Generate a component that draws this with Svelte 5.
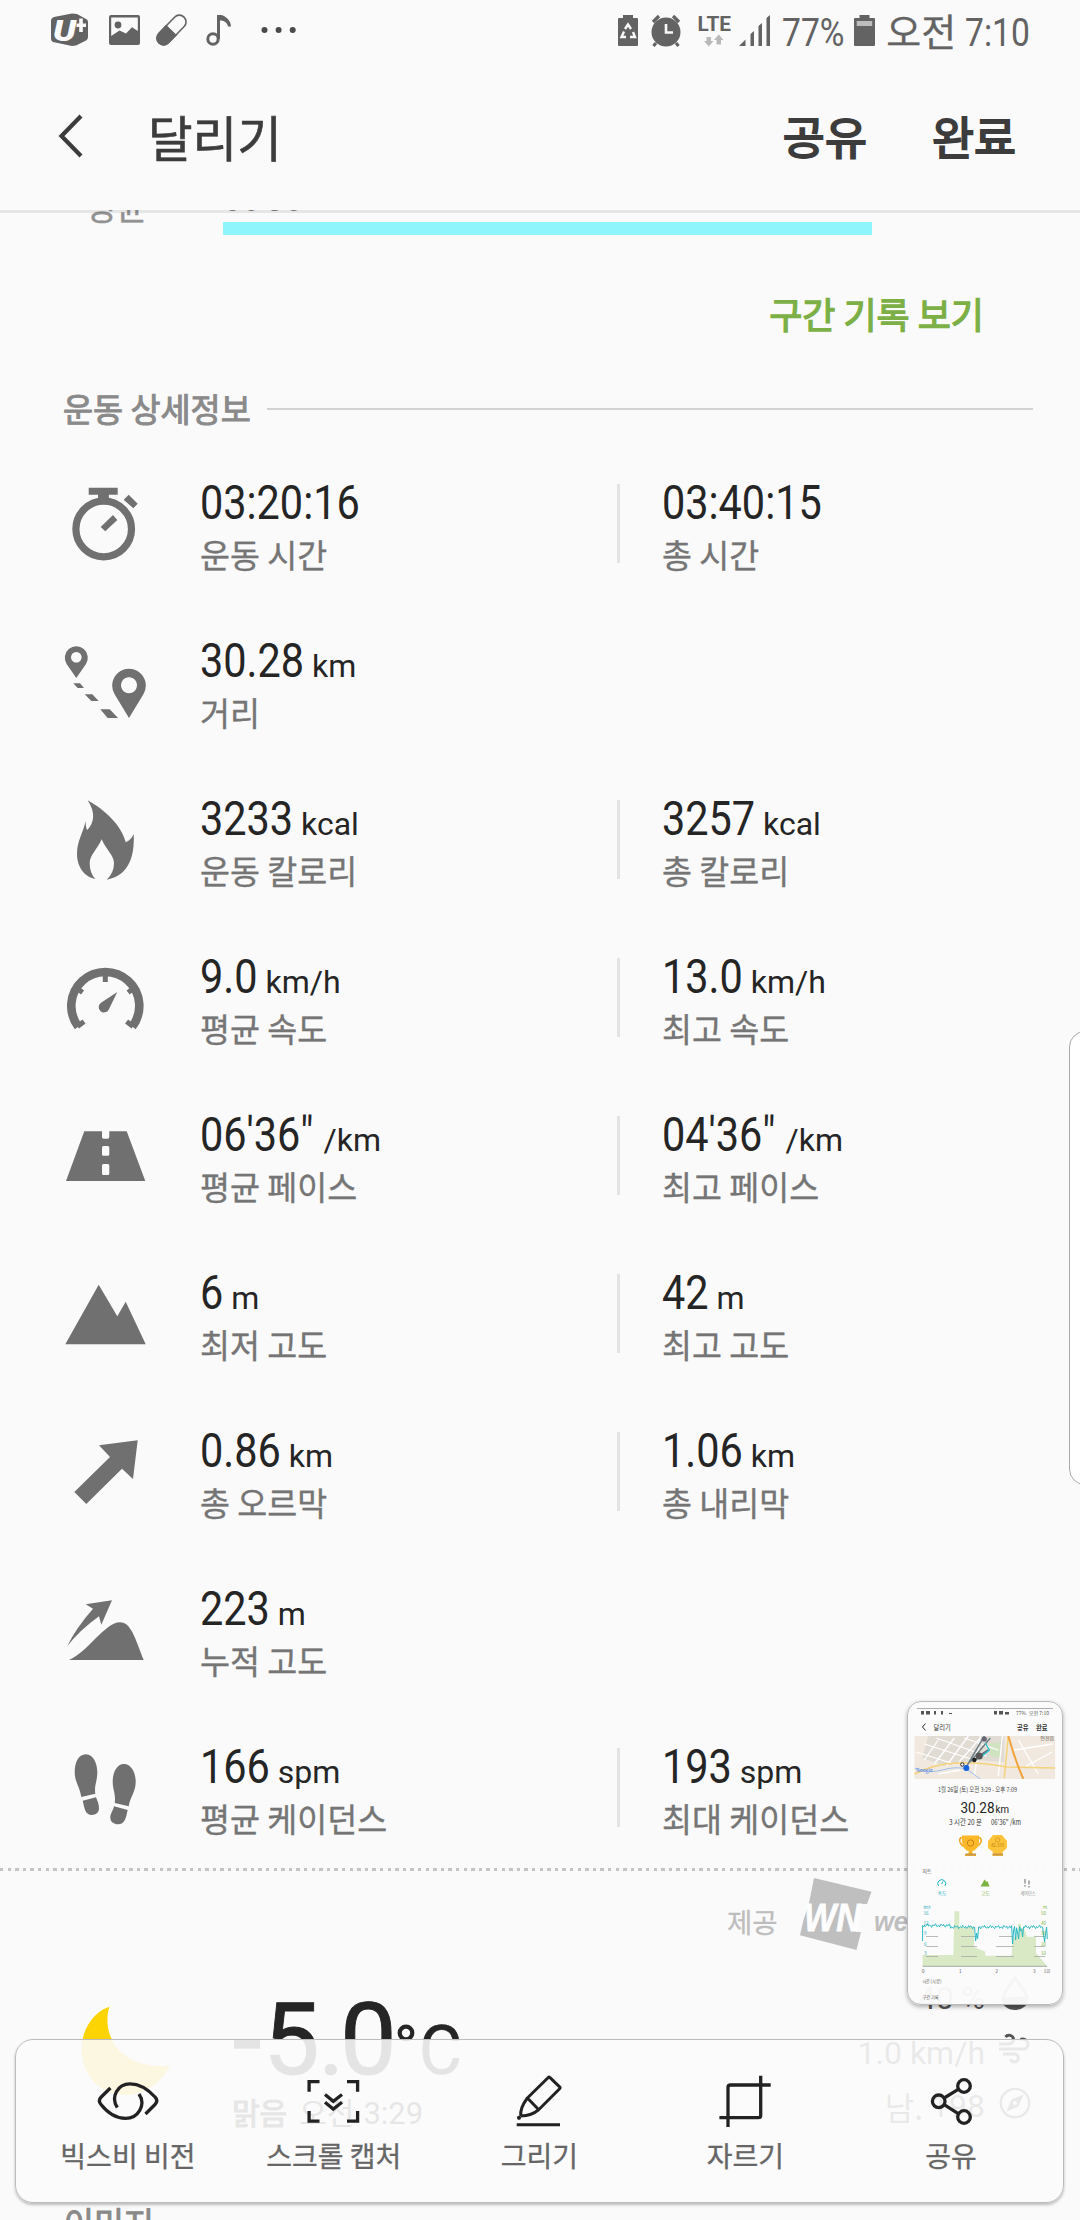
<script>
  const rows = [
    { icon: 'stopwatch', cells: [['03:20:16', '', '운동 시간'], ['03:40:15', '', '총 시간']] },
    { icon: 'route', cells: [['30.28', 'km', '거리']] },
    { icon: 'flame', cells: [['3233', 'kcal', '운동 칼로리'], ['3257', 'kcal', '총 칼로리']] },
    { icon: 'gauge', cells: [['9.0', 'km/h', '평균 속도'], ['13.0', 'km/h', '최고 속도']] },
    { icon: 'road', cells: [['06\'36"', '/km', '평균 페이스'], ['04\'36"', '/km', '최고 페이스']] },
    { icon: 'mountain', cells: [['6', 'm', '최저 고도'], ['42', 'm', '최고 고도']] },
    { icon: 'arrow', cells: [['0.86', 'km', '총 오르막'], ['1.06', 'km', '총 내리막']] },
    { icon: 'hill', cells: [['223', 'm', '누적 고도']] },
    { icon: 'feet', cells: [['166', 'spm', '평균 케이던스'], ['193', 'spm', '최대 케이던스']] }
  ];

  const tools = [
    ['vision', '빅스비 비전'],
    ['scroll', '스크롤 캡처'],
    ['draw', '그리기'],
    ['crop', '자르기'],
    ['share', '공유']
  ];

  // Advance widths in em, narrowed to a condensed face.
  const NARROW = 0.863;
  const advance = { ':': 0.242, '.': 0.263, "'": 0.174, '"': 0.37, '%': 0.733 };
  const widthOf = (text, size) =>
    [...text].reduce((sum, ch) => sum + (advance[ch] ?? 0.5615), 0) * size * NARROW;

  // Pace trace of the preview chart.
  const dips = { 53: 240, 54: 232, 55: 238, 90: 243, 91: 229, 93: 239, 95: 232, 96: 238, 98: 230, 100: 236, 121: 234, 122: 241, 123: 233 };
  let trace = 'M15.6 240';
  for (let i = 0; i <= 124; i++) {
    const y = dips[i] ?? 226 + Math.sin(i * 2.3) * 1.2 + Math.sin(i * 0.9) * 0.8 - (i < 28 ? 1.5 : 0);
    trace += ` L${(15.6 + i).toFixed(1)} ${y.toFixed(1)}`;
  }
  trace += ' L140.3 238';
</script>

{#snippet narrow(text, size)}
  <span class="narrow" style="width:{widthOf(text, size)}px"><span class="squeeze">{text}</span></span>
{/snippet}

{#snippet detailIcon(name)}
  <svg class="icon" viewBox="0 0 90 99" width="90" height="99" fill="#707070">
    {#if name === 'stopwatch'}
      <circle cx="43.7" cy="54" r="27.8" fill="none" stroke="#707070" stroke-width="7.2" />
      <path d="M28.7 12.7H57.7V19.7H48.9V27H38V19.7H28.7ZM68.7 19.7L77.7 28.7L73.3 33.3L63.7 24.7ZM53 40L57.3 45L45.3 56.3L40.7 52Z" />
    {:else if name === 'route'}
      <path fill-rule="evenodd" d="M16.3 45L6.6 31A11.5 11.5 0 1 1 26 31ZM16.3 19a5.3 5.3 0 1 0 .01 0Z" />
      <path fill-rule="evenodd" d="M69 85L54.6 61.2A16.8 16.8 0 1 1 83.4 61.2ZM69 44.3a8 8 0 1 0 .01 0Z" />
      <path d="M13.3 50.3H20L24 55H17.7ZM24.7 61.3H32.3L38.7 68H31.3ZM40.3 76.3H49.7L58 85H47.7Z" />
    {:else if name === 'flame'}
      <path d="M27.7 9.3C45 19 62 35 65.7 51.3Q71 49 73.7 43C75 70 66 85 46.7 88.7Q54 82 54 72.3C54 64 46 59 41.7 48.3C37 59 29.7 64 29.7 72.3Q29.7 82 35.3 88C22 85 17 73 17 63C17 50 23 42 25.7 30Q25.5 37 27.3 39C34 32 36 22 27.7 9.3Z" />
    {:else if name === 'gauge'}
      <g fill="none" stroke="#707070">
        <path d="M18.3 77.6A34 34 0 1 1 72.3 77.6" stroke-width="8.6" />
        <path d="M17.5 77.5L24 72.5M73.1 77.5L66.6 72.5M45.3 27V33M17.5 39.5L22.5 43.5M73.1 39.5L68.1 43.5" stroke-width="5" />
      </g>
      <path d="M57.3 43L48.8 60.4A5.3 5.3 0 1 1 41 53.8Z" />
    {:else if name === 'road'}
      <path fill-rule="evenodd" d="M24.3 24.3H42V30Q42 31.7 43.7 31.7H47.6Q49.3 31.7 49.3 30V24.3H66.7L85.3 74H6ZM43.5 39H47.8Q49.3 39 49.3 40.5V47.2Q49.3 48.7 47.8 48.7H43.5Q42 48.7 42 47.2V40.5Q42 39 43.5 39ZM43.5 57H47.8Q49.3 57 49.3 58.5V66.5Q49.3 68 47.8 68H43.5Q42 68 42 66.5V58.5Q42 57 43.5 57Z" />
    {:else if name === 'mountain'}
      <path d="M38.7 19.7L57.3 51.3L65.7 36.7L85.7 79.3H5.3Z" />
    {:else if name === 'arrow'}
      <path d="M77.7 17.3L73 56L62 45.7L26.3 81L14.3 69L50 34L39 22.3Z" />
    {:else if name === 'hill'}
      <path d="M52 19.3L41.3 43.7L39 35.3Q20 49 7.3 65Q16 47 33 27.7L25.7 23.3ZM9 79C28 71 45 41.3 60 41.3C71 41.3 75 57 83.7 79Z" />
    {:else}
      <path d="M26 15.3C18 15.3 14.7 24 14.7 33C14.7 43 19.5 47 21.3 58L35.3 54.7C34 46 37.3 43 37.3 33C37.3 24 33 15.3 26 15.3ZM22.7 61.7L36 58.3C37.5 62 39 65 39 69.3C39 74 35.5 76 32 76C25 76 24.5 69 22.7 61.7Z" />
      <path d="M64 25C56.5 25 52.7 34 52.7 42.7C52.7 51 56 55 54.7 64L68.7 67.3C70 58 75.7 53 75.7 42.7C75.7 33 71 25 64 25ZM54 67.3L67.7 71C66 78 65.5 85.3 58 85.3C54 85.3 50.3 83 50.3 78.5C50.3 74.5 53 72 54 67.3Z" />
    {/if}
  </svg>
{/snippet}

{#snippet toolIcon(name)}
  <svg class="icon" viewBox="0 0 64 60" width="64" height="60" fill="none" stroke="#222" stroke-width="3.3">
    {#if name === 'vision'}
      <path d="M14.4 17L5.2 26Q1.6 29.7 5 33.5Q16 47.4 29.5 47.4C42 47.4 50.5 34 43 23M49.5 43L59 33.5Q62.6 29.7 59 26Q47 12.8 34 12.8C21.5 12.8 14.5 26 21.3 36.7" />
    {:else if name === 'scroll'}
      <path d="M7.1 20.7V10.6H17.5M45 10.6H55.6V20.7M55.6 40V50.1H45M17.5 50.1H7.1V40M23 23.5L31.3 30.3L40 23.5M23 31.3L31.3 38.1L40 31.3" />
    {:else if name === 'draw'}
      <path d="M20.4 27L41 6.7Q42 5.7 43 6.7L52.6 15.8Q53.6 16.8 52.6 17.8L31.7 38.7ZM20.4 27Q12.8 37 13.8 45M31.7 38.7Q25 44.8 13.8 45M9.7 53.7H53" stroke-width="3" />
      <circle cx="12" cy="46.8" r="2.1" fill="#222" stroke="none" />
    {:else if name === 'crop'}
      <path d="M15 56V16.5Q15 14 17.5 14H57.7M47.7 4.7V44.5Q47.7 46.7 45.2 46.7H6.4" />
    {:else}
      <circle cx="19.7" cy="30.3" r="6.3" />
      <circle cx="45" cy="15" r="6.3" />
      <circle cx="45" cy="46" r="6.3" />
      <path d="M25.2 27L39.6 18.2M25.2 33.6L39.6 42.8" />
    {/if}
  </svg>
{/snippet}

<div class="screen">
  <header>
    <div class="status">
      <svg viewBox="0 0 260 36" width="260" height="36" fill="#636363">
        <path d="M4 5L22 1.5L27 2L37 7.5Q38 8.500 38 10V25Q38 27 36.500 28.200L26 33.500L22 34L3 30Q1 29 1 27V9Q1 6 4 5Z" />
        <text class="logo" x="3" y="29" textLength="23" lengthAdjust="spacingAndGlyphs">U</text>
        <path d="M31 6.500V20M26.500 13.200H36" stroke="#fafafa" stroke-width="3.600" />
        <rect x="59" y="3" width="31" height="30" rx="2" />
        <path d="M61.200 5.500H87.800V19L82 15.300L76 21.500L69.500 18.500L61.200 24Z" fill="#fafafa" />
        <circle cx="68" cy="13" r="3.400" />
        <g transform="rotate(-46 121.500 18)">
          <rect x="103.500" y="11.300" width="36" height="13.400" rx="6.700" fill="none" stroke="#636363" stroke-width="1.600" />
          <path d="M121.500 10.500H110.200A7.500 7.500 0 0 0 110.200 25.500H121.500Z" />
        </g>
        <circle cx="163" cy="27" r="5.200" fill="none" stroke="#636363" stroke-width="3" />
        <path d="M167 3H170.500C175 3.500 181 8 181 14.500H178C177 9.500 173 8.500 170 8.500V27H167Z" />
        <g fill="#4a4a4a"><circle cx="214.500" cy="18" r="3" /><circle cx="228.600" cy="18" r="3" /><circle cx="242.700" cy="18" r="3" /></g>
      </svg>
      <div class="status-right">
        <svg viewBox="0 0 158 36" width="158" height="36" fill="#636363">
          <path d="M2 6H6V3H16V6H20Q21 6 21 7V33Q21 34 20 34H2Q1 34 1 33V7Q1 6 2 6Z" />
          <path d="M8 17L11 12.500L14 17M16 20L18 25H13M9 25H4.500L7 19.500" fill="none" stroke="#fafafa" stroke-width="2.400" />
          <circle cx="49" cy="20" r="14.500" />
          <path d="M36 10L42 4M62 10L56 4M39 31L36.500 34M59 31L61.500 34" stroke="#636363" stroke-width="3.200" />
          <path d="M49 12V20.500H56" fill="none" stroke="#fafafa" stroke-width="2.600" />
          <text class="lte" x="80.500" y="18.700" textLength="33.500" lengthAdjust="spacingAndGlyphs">LTE</text>
          <path d="M89.500 25H94V29H96.500L91.800 34.500L87 29H89.500ZM99.500 32.500H104V28H106.500L101.800 22.500L97 28H99.500Z" fill="#b9b9b9" />
          <path d="M122 34L128.500 27.500V34ZM133.500 22L137 19V34H133.500ZM141.500 14L145 11V34H141.500ZM149.500 6L153 3V34H149.500Z" />
        </svg>
        <span class="clock pct">{@render narrow('77%', 39)}</span>
        <svg class="batt" viewBox="0 0 21 36" width="21" height="36" fill="#636363">
          <path d="M1 6H5.500V3H15.500V6H20Q21 6 21 7V33Q21 34 20 34H1Q0 34 0 33V7Q0 6 1 6Z" />
          <rect x="2.700" y="9" width="15.500" height="5" fill="#bdbdbd" />
        </svg>
        <span class="ampm">오전</span>
        <span class="clock">{@render narrow('7:10', 39)}</span>
      </div>
    </div>
    <div class="titlebar">
      <svg viewBox="0 0 30 48" width="30" height="48" fill="none" stroke="#3c3c3c" stroke-width="4.200">
        <path d="M25 4L5.500 24L25 44" />
      </svg>
      <h1>달리기</h1>
      <b class="act">공유</b>
      <b class="act">완료</b>
    </div>
  </header>

  <main>
    <div class="split">
      <span class="split-name">평균</span>
      <div class="split-body">
        <div class="split-value">{@render narrow('06\'36"', 38)}</div>
        <div class="split-bar"></div>
      </div>
    </div>
    <div class="link">구간 기록 보기</div>
    <div class="section"><span>운동 상세정보</span><i></i></div>

    <div class="details">
      {#each rows as row}
        <div class="row">
          {@render detailIcon(row.icon)}
          {#each row.cells as [value, unit, label], i}
            <div class="cell" class:second={i === 1}>
              <div class="value">{@render narrow(value, 48)}<span class="unit">{unit}</span></div>
              <div class="label">{label}</div>
            </div>
          {/each}
        </div>
      {/each}
    </div>

    <div class="dots"></div>

    <div class="provider">
      <span>제공</span>
      <svg viewBox="0 0 120 76" width="120" height="76">
        <path d="M16 2L73.500 15.700L69 28H62L58 56H63L58.500 74L2 59.300L5.500 44L11 27Z" fill="#bfbfbf" />
        <text class="wn" x="6" y="55" textLength="57" lengthAdjust="spacingAndGlyphs">WN</text>
        <text class="we" x="76" y="55" textLength="34" lengthAdjust="spacingAndGlyphs">we</text>
      </svg>
    </div>

    <div class="weather">
      <svg class="moon" viewBox="0 0 92 94" width="92" height="94">
        <path d="M29.500 2.700C22 25 33 65 90 62C79 82 62 91 45 91C20 91 1.600 71 1.600 45C1.600 26 13 8 29.500 2.700Z" fill="#fcd404" />
      </svg>
      <div class="temps">
        <svg viewBox="0 0 240 84" width="240" height="84" fill="#252525">
          <rect x="4" y="43" width="26" height="9.700" />
          <text class="temp" x="33 88 110" y="78">5.0</text>
          <circle cx="176" cy="37" r="6.300" fill="none" stroke="#252525" stroke-width="4.200" />
          <text class="deg" x="189" y="78" textLength="43" lengthAdjust="spacingAndGlyphs">C</text>
        </svg>
        <div class="cond"><b>맑음</b><span class="when">오전</span><span class="lat">3:29</span></div>
      </div>
      <div class="facts">
        <div class="fact"><span class="lat">40 %</span>
          <svg class="up" viewBox="0 0 34 36" width="34" height="36"><path d="M17 3C12 11 5 17 5 23.500A12 10 0 0 0 29 23.500C29 17 22 11 17 3Z" fill="none" stroke="#555" stroke-width="3" /><path d="M5 22H29A12 11 0 0 1 5 22Z" fill="#555" /></svg>
        </div>
        <div class="fact"><span class="lat">1.0 km/h</span>
          <svg class="up" viewBox="0 0 34 36" width="34" height="36" fill="none" stroke="#555" stroke-width="3"><path d="M1 14H11Q16 13 15.500 9A4.500 4.500 0 0 0 7.500 7M1 19H27A4.600 4.600 0 1 0 22.500 9.500M5 24H17A4 4 0 1 1 12.500 29" /></svg>
        </div>
        <div class="fact last"><span>남.</span> <span class="lat num">198</span>
          <svg viewBox="0 0 34 36" width="34" height="36"><circle cx="17" cy="15" r="14.200" fill="none" stroke="#555" stroke-width="2.400" /><path fill-rule="evenodd" d="M25.500 6.500L20.500 18.500L8.500 23.500L13.500 11.500ZM17 13a2 2 0 1 0 .01 0Z" fill="#555" /></svg>
        </div>
      </div>
    </div>
    <div class="next">이미지</div>
  </main>

  <div class="edge"></div>

  <div class="toolbar">
    {#each tools as [icon, name]}
      <div class="tool">
        {@render toolIcon(icon)}
        <span>{name}</span>
      </div>
    {/each}
  </div>

  <div class="preview">
    <svg viewBox="0 0 156 304" width="156" height="304">
      <path d="M10 7.500H146" stroke="#9a9a9a" stroke-width=".8" />
      <g fill="#555">
        <path d="M14 10h3v3.500h-3zM19 10h4v3.500h-4zM27 10h2v3.500h-2zM34 10h2v3.500h-2zM42 12h3v1h-3zM87 10h3v3.500h-3zM92 10h4v3.500h-4zM98 11h4v2.500h-4z" />
        <text class="t5" x="109" y="14">77%</text><text class="t5" x="122" y="14">오전 7:10</text>
      </g>
      <path d="M18.500 22.500L15.500 26L18.500 29.500" fill="none" stroke="#333" />
      <g fill="#333">
        <text class="t6" x="26.500" y="28.500">달리기</text>
        <text class="t6 bold" x="110" y="28.500">공유</text>
        <text class="t6 bold" x="129" y="28.500">완료</text>
      </g>
      <svg x="7.300" y="35" width="141" height="43" viewBox="0 0 141 43">
        <rect width="141" height="43" fill="#f1e9df" />
        <path d="M14 0H90V26L60 24L30 30L8 22Z" fill="#e0dbd3" />
        <path d="M74 8L86 6L86 22L76 20Z" fill="#cfe3c0" />
        <path d="M10 24L24 4M20 28L40 2M32 30L54 0M44 27L66 2M10 8L60 24M22 2L72 20M2 16L40 28M50 2L84 14M60 40L66 0M84 40L88 0M24 38L46 34M104 4L124 38M112 30L138 16M100 14L138 8" stroke="#fff" stroke-width="1.300" fill="none" />
        <path d="M0 38Q20 28 42 27T92 31L141 32M90 42L94 0" stroke="#f4d27a" stroke-width="1.500" fill="none" />
        <path d="M94 0Q100 22 109 43" stroke="#f0a23c" stroke-width="2" fill="none" />
        <path d="M0 32Q14 38 28 34T52 33L66 43" stroke="#9dbdec" fill="none" />
        <path d="M52 31L70 0M56 26L76 2" stroke="#6f7f88" stroke-width="1.500" fill="none" />
        <path d="M60 25L68 18L74 14" stroke="#5f707a" stroke-width="2" fill="none" />
        <path d="M71 7L75 14L68 20" stroke="#25bfd0" stroke-width="1.300" fill="none" />
        <circle cx="70" cy="3" r="2.600" fill="#667" /><circle cx="65" cy="20" r="3.500" fill="#555" /><circle cx="60" cy="24" r="2.200" fill="#222" />
        <circle cx="48" cy="28.500" r="1.700" fill="#fff" stroke="#222" />
        <circle cx="52" cy="32" r="3" fill="#1662dd" />
        <text class="t5" x="2" y="36" fill="#4a7fe0">Google</text>
        <text class="t5" x="126" y="4" fill="#555">연천읍</text>
      </svg>
      <text class="t6" x="31" y="91" fill="#444" textLength="79" lengthAdjust="spacingAndGlyphs">1월 26일 (토) 오전 3:29 - 오후 7:09</text>
      <text class="big" x="53.500" y="112" fill="#222" textLength="34" lengthAdjust="spacingAndGlyphs">30.28</text>
      <text class="mid" x="88.500" y="112" fill="#222" textLength="13.500" lengthAdjust="spacingAndGlyphs">km</text>
      <text class="t7" x="42" y="123.500" fill="#333" textLength="33" lengthAdjust="spacingAndGlyphs">3 시간 20 분</text>
      <text class="t7" x="84" y="123.500" fill="#333" textLength="30" lengthAdjust="spacingAndGlyphs">06'36" /km</text>
      <path d="M55 136.500Q52 137 53 141Q54.500 145 58 145.500M71.500 136.500Q75 137 74 141Q72 145 68.500 145.500" fill="none" stroke="#f2a41f" stroke-width="1.600" />
      <path d="M55 134.500H72V141Q71 149 65 150.500L66 153H69V155H58V153H61L62 150.500Q56 149 55 141Z" fill="#fbb829" />
      <circle cx="63.500" cy="142" r="3.200" fill="none" stroke="#c07f10" stroke-width=".9" />
      <path d="M86 134H95L100 140V147L95.500 151L96 155H85.500L86 151L81 147V140Z" fill="#fbc43a" />
      <path d="M85.500 153.500H96M58.500 153.500H69" stroke="#c8964a" stroke-width="1.800" />
      <text class="t5" x="84" y="145.500" fill="#c07f10" textLength="13" lengthAdjust="spacingAndGlyphs">42.195</text>
      <circle cx="90.600" cy="139" r="2.200" fill="none" stroke="#d08f18" stroke-width=".7" />
      <text class="t5" x="15.500" y="171.500" fill="#555">차트</text>
      <path d="M31.500 185A4 4 0 1 1 38 185M34.700 183L36 180.500" fill="none" stroke="#19b3c4" />
      <path d="M73.500 185.500L77.500 178.500L79.500 181L80.500 180L82.500 185.500Z" fill="#7cb342" />
      <path d="M118 178v4.500M118 184v1.500M122 179.500v4M122 185v1.500" stroke="#b0b0b0" stroke-width="2" />
      <text class="t5" x="30.500" y="193.500" fill="#19b3c4">속도</text>
      <text class="t5" x="74" y="193.500" fill="#7cb342">고도</text>
      <text class="t5" x="113.500" y="193.500" fill="#888" textLength="15" lengthAdjust="spacingAndGlyphs">케이던스</text>
      <path d="M15.600 254H46.300L47.500 210.300H52.300V226H67V246L78.300 250.700V254.700H104.500L106 237L111 234V223H114V227H117L120 235.700H129V252L140 265H15.600Z" fill="#d9e9c6" />
      <path d="M19 235.500H31M54 235.500H70M92 235.500H106M127 235.500H138M19 245.500H31M54 245.500H70M89 245.500H107M127 245.500H138M19 255.500H31M54 255.500H70M89 255.500H107M127 255.500H138" stroke="#a9aaa5" stroke-width=".8" />
      <path d="M15.600 265.300H140" stroke="#8d958a" stroke-width=".8" />
      <path d={trace} fill="none" stroke="#2bb9c4" stroke-width="1" />
      <g fill="#19a9ba"><text class="t4" x="16.500" y="208" textLength="7" lengthAdjust="spacingAndGlyphs">km/h</text><text class="t4" x="16.500" y="214">16</text><text class="t4" x="16.500" y="224">12</text><text class="t4" x="17" y="234">9</text><text class="t4" x="17" y="244.500">6</text><text class="t4" x="17" y="254">3</text></g>
      <g fill="#7cb342"><text class="t4" x="136" y="208">m</text><text class="t4" x="134" y="214">50</text><text class="t4" x="134" y="224">40</text><text class="t4" x="134" y="234">30</text><text class="t4" x="134" y="244.500">20</text><text class="t4" x="134" y="254">10</text></g>
      <g fill="#555"><text class="t4" x="15" y="272">0</text><text class="t4" x="52" y="272">1</text><text class="t4" x="88.500" y="272">2</text><text class="t4" x="126" y="272">3</text><text class="t4" x="137" y="272" textLength="6" lengthAdjust="spacingAndGlyphs">3:20</text>
        <text class="t5" x="15.500" y="281.500" textLength="19" lengthAdjust="spacingAndGlyphs">시간 (시:분)</text><text class="t5" x="15.500" y="297.500" textLength="16" lengthAdjust="spacingAndGlyphs">구간 기록</text></g>
    </svg>
  </div>
</div>

<style>
  :global(body) { margin: 0; background: #fafafa; }
  .screen {
    position: relative; width: 1080px; height: 2220px; overflow: hidden;
    background: #fafafa; font-family: "Noto Sans CJK KR", "Noto Sans", sans-serif; color: #252525;
    display: flex; flex-direction: column; white-space: nowrap;
  }
  svg { display: block; flex: none; }
  .narrow { display: inline-block; flex: none; text-align: left; }
  .squeeze { display: inline-block; transform: scaleX(.863); transform-origin: 0 50%; }

  header { height: 210px; flex: none; position: relative; z-index: 1; }
  header::after { content: ""; position: absolute; left: 0; right: 0; top: 100%; height: 3px; background: rgba(0, 0, 0, .08); }
  .status { height: 64px; padding: 0 50px; display: flex; justify-content: space-between; box-sizing: border-box; }
  .status > svg, .status-right > svg { margin-top: 12px; }
  .status-right { display: flex; }
  .clock { font: 39px/48px Roboto, sans-serif; color: #636363; margin-top: 9px; }
  .pct { margin-left: 7px; }
  .batt { margin-left: 10px; }
  .ampm { font-size: 38px; line-height: 48px; color: #636363; margin: 6px 9px 0 11px; -webkit-text-stroke: .3px; }
  .logo { font: italic 900 30px Roboto, sans-serif; fill: #fafafa; }
  .lte { font: 700 20px Roboto, sans-serif; }

  .titlebar { height: 146px; display: flex; padding: 0 64px 0 56px; color: #3c3c3c; }
  .titlebar svg { margin-top: 48px; }
  h1 { margin: 42px auto 0 62px; font-size: 48.5px; font-weight: 400; line-height: 60px; -webkit-text-stroke: .6px; }
  .act { font-size: 45.7px; font-weight: 400; line-height: 60px; margin: 41px 0 0 65px; -webkit-text-stroke: 1.9px; }

  main { flex: none; height: 2010px; overflow: hidden; }
  .split { height: 25px; display: flex; }
  .split-name { width: 138px; margin: -24px 0 0 85px; font-size: 34px; line-height: 40px; color: #929292; -webkit-text-stroke: .4px; }
  .split-body { width: 649px; margin-top: -32px; }
  .split-value { font: 38px/40px Roboto, sans-serif; height: 40px; color: #808080; }
  .split-bar { height: 13px; margin-top: 4px; background: #8df5fb; }
  .link { margin: 54px 96px 0 0; text-align: right; font-size: 36px; line-height: 48px; color: #7cb046; -webkit-text-stroke: 1.3px; }
  .section { margin: 51px 47px 0 63px; display: flex; gap: 16px; align-items: center; font-size: 32.7px; line-height: 40px; color: #8a8a8a; -webkit-text-stroke: 1px; }
  .section i { flex: 1; height: 2px; background: #d3d3d3; margin-top: 2px; }

  .details { margin-top: 47px; display: grid; row-gap: 59px; }
  .row { display: grid; grid-template-columns: 90px 367px 1fr; height: 99px; padding-left: 60px; column-gap: 50px; }
  .cell.second { padding-left: 45px; position: relative; }
  .cell.second::before { content: ""; position: absolute; left: 0; top: 9px; width: 3px; height: 79px; background: #e3e3e3; }
  .value { height: 56px; display: flex; align-items: baseline; font: 48px/56px Roboto, sans-serif; color: #252525; }
  .unit { font-size: 32px; line-height: 32px; margin-left: 8px; }
  .label { margin-top: 3px; font-size: 32.6px; line-height: 40px; color: #757575; -webkit-text-stroke: .35px; }

  .dots { margin-top: 30px; height: 3px; background: repeating-linear-gradient(90deg, #c3c3c3 0 3.500px, transparent 3.500px 7.600px); }
  .provider { height: 100px; display: flex; padding: 5px 0 0 727px; box-sizing: border-box; color: #bdbdbd; font-size: 27.500px; line-height: 40px; }
  .provider span { width: 71px; margin-top: 25px; -webkit-text-stroke: .3px; }
  .wn { font: italic 700 38px "Liberation Sans", sans-serif; fill: #fdfdfd; stroke: #fdfdfd; stroke-width: .8px; }
  .we { font: italic 700 28px "Liberation Sans", sans-serif; fill: #bfbfbf; }

  .weather { height: 231px; display: flex; padding-left: 80px; }
  .moon { margin-top: 33px; }
  .temps { margin: 25px 0 0 58px; flex: 1; }
  .temp { font: 101px Roboto, sans-serif; stroke: #252525; stroke-width: .9px; }
  .deg { font: 69px Roboto, sans-serif; stroke: #252525; stroke-width: .6px; }
  .cond { margin: 11px 0 0 2px; font-size: 30px; line-height: 40px; color: #333; display: flex; align-items: baseline; }
  .cond b { font-weight: 400; -webkit-text-stroke: 1.2px; }
  .cond .when { margin: 0 9px 0 12px; }
  .cond .lat { font-size: 31px; }
  .lat { font-family: Roboto, sans-serif; }
  .facts { width: 300px; padding-right: 48px; }
  .fact { height: 54.500px; display: flex; justify-content: flex-end; align-items: center; font-size: 32px; line-height: 40px; color: #555; }
  .fact svg { margin-left: 13px; }
  .fact .up { margin-bottom: 10px; }
  .last { height: 51px; }
  .num { margin-left: 8px; }
  .next { padding-left: 64px; font-size: 32.6px; line-height: 40px; color: #8a8a8a; -webkit-text-stroke: 1px; }

  .edge { position: absolute; left: 1069px; top: 1031px; width: 40px; height: 452px; border: 1.500px solid #aaa; border-radius: 16px; background: #fff; }

  .toolbar {
    position: absolute; left: 15px; top: 2039px; width: 1029px; height: 162px; padding: 0 9px; border: 1.500px solid #bcbcbc;
    border-radius: 18px; background: rgba(250, 250, 250, .897); display: flex; box-shadow: 0 2px 3px rgba(0, 0, 0, .25);
  }
  .tool { flex: 1; display: flex; flex-direction: column; align-items: center; padding-top: 31px; }
  .tool span { font-size: 28px; line-height: 40px; color: #666; margin-top: 4px; -webkit-text-stroke: .3px; }

  .preview {
    position: absolute; left: 907px; top: 1701px; width: 154px; height: 302px; border: 1.500px solid #bababa; border-radius: 14px;
    background: rgba(251, 251, 251, .965); box-shadow: 0 2px 4px rgba(0, 0, 0, .3);
  }
  .preview > svg { margin: -1px; }
  .t4 { font-size: 4.500px; }
  .t5 { font-size: 5px; }
  .t6 { font-size: 6.300px; }
  .t7 { font-size: 7.500px; }
  .bold { font-weight: 700; }
  .big { font: 15px Roboto, sans-serif; }
  .mid { font: 10px Roboto, sans-serif; }
</style>
